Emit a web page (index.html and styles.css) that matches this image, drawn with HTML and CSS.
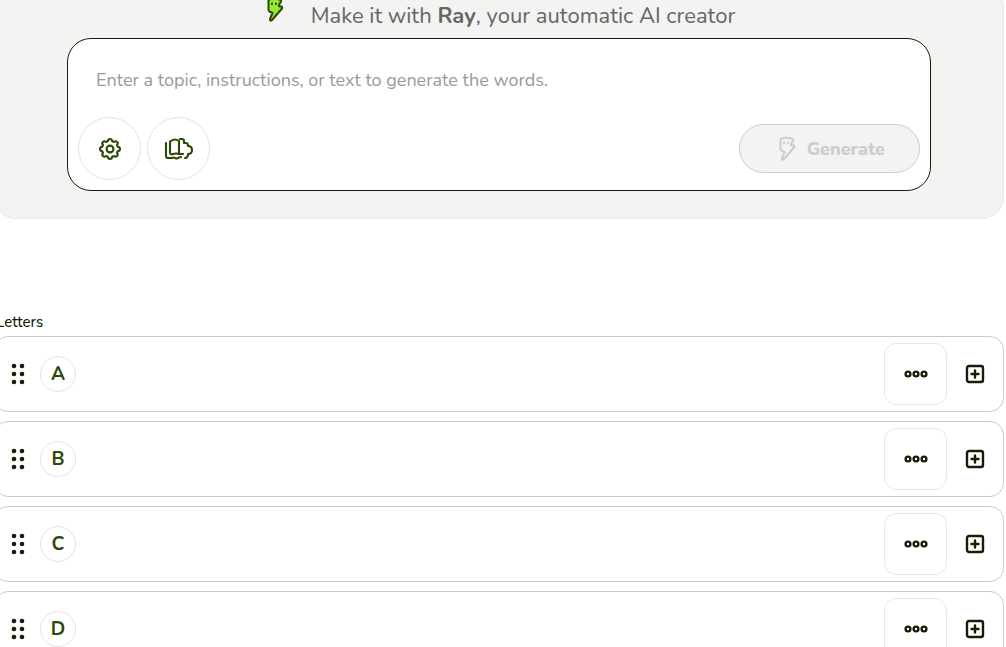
FILE: index.html
```
<!DOCTYPE html>
<html lang="en">
<head>
  <meta charset="UTF-8">
  <meta name="viewport" content="width=device-width, initial-scale=1.0">
  <title>Word creator</title>
  <link rel="stylesheet" href="styles.css">
</head>
<body>
  <!-- Shared icons -->
  <svg class="sprite" aria-hidden="true">
    <symbol id="bolt" viewBox="0 0 18 26">
      <path d="M2.5 3.5Q2.5 2.5 4 2.3Q9 1 14 2.8Q15.5 3.3 15 4.5L13 8Q12.6 9.5 14 9.5L15.5 9.5Q16.5 10 16 11.5L6 23Q4 25 4 22L6.500 16L3.5 14.5Q2.5 14 2.5 12.5Z"/>
      <path d="M6 6.5v.5M10 6.5v.5" fill="none"/>
    </symbol>
    <symbol id="grip" viewBox="0 0 14 22">
      <circle cx="3" cy="3" r="2.3"/><circle cx="11" cy="3" r="2.3"/>
      <circle cx="3" cy="11" r="2.3"/><circle cx="11" cy="11" r="2.3"/>
      <circle cx="3" cy="19" r="2.3"/><circle cx="11" cy="19" r="2.3"/>
    </symbol>
    <symbol id="dots" viewBox="0 0 24 8">
      <circle cx="4" cy="4" r="2.4"/><circle cx="12" cy="4" r="2.4"/><circle cx="20" cy="4" r="2.4"/>
    </symbol>
    <symbol id="plus" viewBox="0 0 20 20">
      <rect x="2" y="2" width="16" height="16" rx="2"/>
      <path d="M10 6.5v7M6.5 10h7"/>
    </symbol>
  </svg>

  <main class="page">
    <section class="creator">
      <h1 class="creator-title">
        <svg class="ray" aria-hidden="true"><use href="#bolt"/></svg>
        <span>Make it with <strong>Ray</strong>, your automatic AI creator</span>
      </h1>
      <form class="prompt">
        <textarea class="prompt-text" rows="1" aria-label="Topic" placeholder="Enter a topic, instructions, or text to generate the words."></textarea>
        <div class="prompt-actions">
          <button type="button" class="round-button" aria-label="Settings">
            <svg class="icon" width="24" height="24" viewBox="0 0 24 24">
              <path d="M9.8 4.3C10.2 1.2 13.8 1.2 14.2 4.3Q14.9 4.4 15.9 5C18.4 3.1 20.9 5.6 19 8.1Q19.6 9.1 19.7 9.8C22.8 10.2 22.8 13.8 19.7 14.2Q19.6 14.9 19 15.9C20.9 18.4 18.4 20.9 15.9 19Q14.9 19.6 14.2 19.7C13.8 22.8 10.2 22.8 9.8 19.7Q9.1 19.6 8.1 19C5.6 20.9 3.1 18.4 5 15.9Q4.4 14.9 4.3 14.2C1.2 13.8 1.2 10.2 4.3 9.8Q4.4 9.1 5 8.1C3.1 5.6 5.6 3.1 8.1 5Q9.1 4.4 9.8 4.3Z"/>
              <circle cx="12" cy="12" r="3.4"/>
            </svg>
          </button>
          <button type="button" class="round-button" aria-label="Content">
            <svg class="icon" width="30" height="24" viewBox="0 0 30 24">
              <path d="M2 6v13Q2 21 4 21H8Q10 20 11 21T14 21T17 20"/>
              <path d="M6 16V5Q6 4 7 4Q11 1 15 4V17M6 16Q7 18 9 17Q12 16 15 17H19"/>
              <path d="M16 2H18Q20 2 20 4V6H22Q24 6 24 9Q28 9 28 13T24 17Q24 21 21 21"/>
            </svg>
          </button>
          <button type="submit" class="generate" disabled>
            <svg class="generate-icon" aria-hidden="true"><use href="#bolt"/></svg>
            Generate
          </button>
        </div>
      </form>
    </section>

    <section class="letters">
      <h2 class="letters-title">Letters</h2>
      <ul class="letter-list">
        <li class="letter-row">
          <button class="grip" aria-label="Move A"><svg><use href="#grip"/></svg></button>
          <span class="letter">A</span>
          <button class="more" aria-label="Options for A"><svg><use href="#dots"/></svg></button>
          <button class="add" aria-label="Add to A"><svg><use href="#plus"/></svg></button>
        </li>
        <li class="letter-row">
          <button class="grip" aria-label="Move B"><svg><use href="#grip"/></svg></button>
          <span class="letter">B</span>
          <button class="more" aria-label="Options for B"><svg><use href="#dots"/></svg></button>
          <button class="add" aria-label="Add to B"><svg><use href="#plus"/></svg></button>
        </li>
        <li class="letter-row">
          <button class="grip" aria-label="Move C"><svg><use href="#grip"/></svg></button>
          <span class="letter">C</span>
          <button class="more" aria-label="Options for C"><svg><use href="#dots"/></svg></button>
          <button class="add" aria-label="Add to C"><svg><use href="#plus"/></svg></button>
        </li>
        <li class="letter-row">
          <button class="grip" aria-label="Move D"><svg><use href="#grip"/></svg></button>
          <span class="letter">D</span>
          <button class="more" aria-label="Options for D"><svg><use href="#dots"/></svg></button>
          <button class="add" aria-label="Add to D"><svg><use href="#plus"/></svg></button>
        </li>
      </ul>
    </section>
  </main>
</body>
</html>
```
FILE: styles.css
```
* {
  box-sizing: border-box;
}

body {
  margin: 0;
  height: 100vh;
  overflow: hidden;
  background-color: #fff;
  color: #141f05;
  font-family: Nunito, Lato, sans-serif;
}

button {
  display: flex;
  align-items: center;
  justify-content: center;
  padding: 0;
  border: none;
  background: none;
  color: inherit;
  font-family: inherit;
  cursor: pointer;
}

svg {
  display: block;
  flex-shrink: 0;
  stroke-linecap: round;
  stroke-linejoin: round;
}

.sprite {
  position: absolute;
  width: 0;
  height: 0;
}

.page {
  margin: -14px 2px 0 -6px;
}

.creator {
  padding: 10px 72px 27px;
  border: 1px solid #e6e6e6;
  border-radius: 22px;
  background-color: #f3f3f2;
}

.creator-title {
  display: flex;
  align-items: center;
  justify-content: center;
  gap: 24px;
  margin: 0;
  padding-bottom: 3px;
  color: #666;
  font-size: 22px;
  font-weight: 400;
  line-height: 34px;
}

.ray {
  width: 24px;
  height: 26px;
  margin-bottom: 12px;
  fill: #97e932;
  stroke: #2a4a04;
  stroke-width: 2;
}

.prompt {
  padding: 25px 10px 10px;
  border: 1px solid #141f05;
  border-radius: 24px;
  background-color: #fff;
}

.prompt-text {
  display: block;
  width: 100%;
  height: 53px;
  padding: 4px 18px;
  border: none;
  outline: none;
  resize: none;
  background: none;
  color: #141f05;
  font-family: inherit;
  font-size: 18px;
  line-height: 24px;
}

.prompt-text::placeholder {
  color: #999;
}

.prompt-actions {
  display: flex;
  align-items: center;
  gap: 6px;
}

.round-button {
  width: 63px;
  height: 63px;
  border: 1px solid #e3e3e3;
  border-radius: 50%;
}

.icon {
  fill: none;
  stroke: #2a4a04;
  stroke-width: 2.1;
}

.generate {
  gap: 7px;
  height: 49px;
  margin-left: auto;
  padding: 0 34px;
  border: 1px solid #ccc;
  border-radius: 25px;
  background-color: #f3f3f2;
  color: #ccc;
  font-size: 18px;
  font-weight: 800;
  cursor: default;
}

.generate-icon {
  width: 26px;
  height: 26px;
  fill: none;
  stroke: #ccc;
  stroke-width: 2;
}

.letters {
  margin-top: 93px;
}

.letters-title {
  margin: 0 0 4px;
  padding-left: 2px;
  font-size: 15px;
  font-weight: 500;
  line-height: 20px;
}

.letter-list {
  display: flex;
  flex-direction: column;
  gap: 9px;
  margin: 0;
  padding: 0;
  list-style: none;
}

.letter-row {
  display: flex;
  align-items: center;
  padding: 6px 18px 6px 16px;
  border: 1px solid #c9c9c9;
  border-radius: 14px;
}

.grip svg {
  width: 14px;
  height: 22px;
  fill: #141f05;
}

.letter {
  width: 36px;
  margin-left: 15px;
  border: 1px solid #e3e3e3;
  border-radius: 50%;
  color: #2a4a04;
  font-size: 19px;
  font-weight: 700;
  line-height: 34px;
  text-align: center;
}

.more {
  width: 63px;
  height: 62px;
  margin-left: auto;
  border: 1px solid #e8e8e8;
  border-radius: 12px;
}

.more svg {
  width: 24px;
  height: 8px;
  fill: none;
  stroke: #141f05;
  stroke-width: 2.4;
}

.add {
  margin-left: 18px;
}

.add svg {
  width: 20px;
  height: 20px;
  fill: none;
  stroke: #141f05;
  stroke-width: 2.4;
}
```
